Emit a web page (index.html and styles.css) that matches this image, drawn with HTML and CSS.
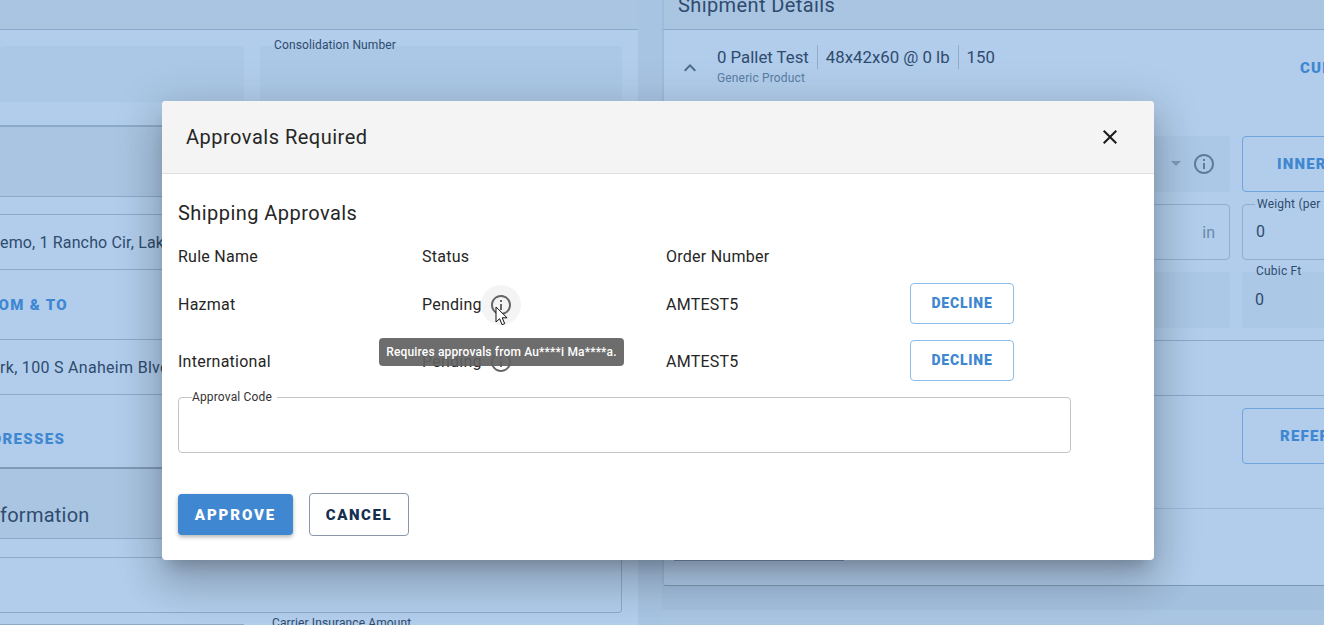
FILE: index.html
```html
<!DOCTYPE html>
<html lang="en">
<head>
<meta charset="utf-8">
<title>Approvals Required</title>
<link rel="stylesheet" href="styles.css">
</head>
<body>
<div class="page">
  <section class="col col-left">
    <div class="panel-head"></div>
    <div class="form-row">
      <div class="fill fill-a"></div>
      <div class="fill-wrap">
        <span class="small-label">Consolidation Number</span>
        <div class="fill fill-b"></div>
      </div>
    </div>
    <div class="band"></div>
    <div class="gap-17"></div>
    <div class="line-row addr addr-first">emo, 1 Rancho Cir, Lake Forest</div>
    <div class="line-row act act-70"><span class="clip-from">FROM &amp; TO</span></div>
    <div class="line-row addr">rk, 100 S Anaheim Blvd</div>
    <div class="line-row act end"><span class="clip-addr">ADDRESSES</span></div>
    <div class="dark-gap"></div>
    <div class="info-head">formation</div>
    <div class="gap-18"></div>
    <div class="box"></div>
    <div class="foot-row">
      <div class="foot-field"></div>
      <span class="small-label foot-label">Carrier Insurance Amount</span>
    </div>
  </section>

  <section class="col col-right">
    <div class="panel-head"><h2 class="ship-title">Shipment Details</h2></div>
    <div class="card">
      <div class="product">
        <svg class="chev" viewBox="0 0 24 24"><path d="M12 8l-6 6 1.41 1.41L12 10.83l4.59 4.58L18 14z"/></svg>
        <div class="product-text">
          <div class="product-line">
            <span class="seg">0 Pallet Test</span><span class="seg">48x42x60 @ 0 lb</span><span class="seg">150</span>
          </div>
          <div class="product-sub">Generic Product</div>
        </div>
        <span class="cut">CUBE</span>
      </div>
      <div class="grid-row">
        <div class="cell fill-cell sel">
          <span class="caret"></span>
          <svg class="info-sm" viewBox="0 0 24 24"><path d="M11 7h2v2h-2zm0 4h2v6h-2zm1-9C6.48 2 2 6.48 2 12s4.48 10 10 10 10-4.48 10-10S17.52 2 12 2zm0 18c-4.41 0-8-3.59-8-8s3.59-8 8-8 8 3.59 8 8-3.59 8-8 8z"/></svg>
        </div>
        <div class="cell btn-cell">INNER PACK</div>
      </div>
      <div class="grid-row">
        <div class="cell out-cell unit">in</div>
        <div class="cell out-cell val"><span class="float">Weight (per unit)</span><span class="num">0</span></div>
      </div>
      <div class="grid-row">
        <div class="cell fill-cell"></div>
        <div class="cell fill-cell val"><span class="float plain">Cubic Ft</span><span class="num">0</span></div>
      </div>
      <div class="rule"></div>
      <div class="rule r-55"></div>
      <div class="ref-row"><div class="cell btn-cell">REFERENCES</div></div>
      <div class="rule r-44"></div>
      <div class="tail"><div class="tail-pill"></div></div>
    </div>
    <div class="below"><div class="below-card"></div></div>
  </section>

  <div class="dialog" role="dialog" aria-label="Approvals Required">
    <header class="dialog-head">
      <h1 class="dialog-title">Approvals Required</h1>
      <svg class="close" viewBox="0 0 24 24"><path d="M19 6.41L17.59 5 12 10.59 6.41 5 5 6.41 10.59 12 5 17.59 6.41 19 12 13.41 17.59 19 19 17.59 13.41 12z"/></svg>
    </header>
    <div class="dialog-body">
      <h2 class="sub-title">Shipping Approvals</h2>
      <div class="approvals">
        <div class="th">Rule Name</div><div class="th">Status</div><div class="th">Order Number</div><div class="th"></div>
        <div class="td">Hazmat</div>
        <div class="td status">Pending
          <span class="icon-btn hover"><svg class="info" viewBox="0 0 24 24"><path d="M11 7h2v2h-2zm0 4h2v6h-2zm1-9C6.48 2 2 6.48 2 12s4.48 10 10 10 10-4.48 10-10S17.52 2 12 2zm0 18c-4.41 0-8-3.59-8-8s3.59-8 8-8 8 3.59 8 8-3.59 8-8 8z"/></svg></span>
        </div>
        <div class="td">AMTEST5</div>
        <div class="td act-cell"><button class="decline">DECLINE</button></div>
        <div class="td">International</div>
        <div class="td status">Pending
          <span class="icon-btn"><svg class="info" viewBox="0 0 24 24"><path d="M11 7h2v2h-2zm0 4h2v6h-2zm1-9C6.48 2 2 6.48 2 12s4.48 10 10 10 10-4.48 10-10S17.52 2 12 2zm0 18c-4.41 0-8-3.59-8-8s3.59-8 8-8 8 3.59 8 8-3.59 8-8 8z"/></svg></span>
        </div>
        <div class="td">AMTEST5</div>
        <div class="td act-cell"><button class="decline">DECLINE</button></div>
      </div>
      <fieldset class="code-field"><legend>Approval Code</legend></fieldset>
      <div class="actions">
        <button class="approve">APPROVE</button>
        <button class="cancel">CANCEL</button>
      </div>
    </div>
    <div class="tooltip">Requires approvals from Au****i Ma****a.</div>
    <svg class="cursor" viewBox="0 0 14 20"><path d="M1 1v15l3.6-3.3 2.5 6 2.6-1.1-2.5-5.8h4.9z"/></svg>
  </div>
</div>
</body>
</html>
```
FILE: styles.css
```css
* { box-sizing: border-box; }
html, body { margin: 0; padding: 0; height: 100%; overflow: hidden; }
body { font-family: Roboto, "Noto Sans", sans-serif; color: #2f4b6e; background: #a8c4e3; }
button { font-family: inherit; cursor: pointer; }

.page { position: relative; width: 1324px; height: 625px; overflow: hidden; display: flex; gap: 24px; background: #a8c4e3; }
.col { display: flex; flex-direction: column; height: 625px; flex: none; overflow: hidden; }
.col-left { width: 638px; background: #b1cdeb; }
.col-right { width: 662px; }

.panel-head { height: 30px; flex: none; background: #a9c5e2; border-bottom: 1px solid #8ca9c9; }
.small-label { font-size: 12px; line-height: 14px; color: #2f4b6e; white-space: nowrap; letter-spacing: .12px; }

.form-row { height: 97px; flex: none; display: flex; gap: 16px; padding: 16px 16px 0 0; border-bottom: 2px solid #8ca9c9; }
.fill { background: #abc8e6; border-radius: 4px 4px 0 0; height: 56px; }
.fill-a { width: 244px; }
.fill-wrap { flex: 1; position: relative; }
.fill-wrap .small-label { position: absolute; left: 14px; top: -8px; }
.fill-b { width: 100%; }

.band { height: 70px; flex: none; background: #a9c5e2; border-bottom: 1px solid #8ca9c9; }
.gap-17 { height: 17px; flex: none; }
.gap-18 { height: 18px; flex: none; }
.line-row { flex: none; display: flex; align-items: center; border-top: 1px solid #8ca9c9; font-size: 16px; letter-spacing: .3px; white-space: nowrap; color: #2f4b6e; }
.addr { height: 55px; }
.addr-first { letter-spacing: .15px; }
.act { font-weight: 900; font-size: 15px; letter-spacing: 1.3px; color: #3f87d1; }
.act-70 { height: 70px; }
.end { height: 75px; padding-top: 16px; border-bottom: 2px solid #8099b8; }
.clip-from { margin-left: -22px; }
.clip-addr { margin-left: -31px; }
.dark-gap { height: 23px; flex: none; background: #a9c5e2; }
.info-head { height: 47px; flex: none; display: flex; align-items: center; background: #a9c5e2; border-bottom: 1px solid #8ca9c9; font-size: 20px; letter-spacing: .25px; color: #2f4b6e; }
.box { width: 622px; height: 56px; flex: none; border: 1px solid #8ca9c9; border-left: 0; border-radius: 0 0 4px 0; }
.foot-row { position: relative; flex: 1; display: flex; align-items: flex-end; }
.foot-field { width: 244px; height: 1px; background: #8ca9c9; }
.foot-label { position: absolute; left: 272px; top: 3px; }

.ship-title { margin: -9px 0 0 14px; font-size: 20px; font-weight: 400; line-height: 28px; letter-spacing: .4px; color: #2f4b6e; }
.col-right .panel-head { border-left: 2px solid #9fbcdc; }
.card { height: 556px; flex: none; background: #b1cdeb; position: relative; border-bottom: 1px solid #7e99b8; border-left: 2px solid #9fbcdc; border-radius: 0 0 0 4px; display: flex; flex-direction: column; }
.product { height: 76px; flex: none; display: flex; align-items: center; position: relative; padding-left: 14px; }
.chev { width: 24px; height: 24px; fill: #4d6a8c; flex: none; }
.product-text { margin-left: 15px; margin-top: -6px; }
.product-line { display: flex; font-size: 16.8px; line-height: 24px; }
.seg { padding: 0 8px; border-left: 1px solid #90acca; }
.seg:first-child { padding-left: 0; border-left: 0; }
.product-sub { font-size: 12px; line-height: 16px; letter-spacing: .15px; color: #5a7ca3; margin-top: 1px; }
.cut { position: absolute; left: 636px; top: 29px; font-size: 15px; font-weight: 900; letter-spacing: 1.2px; color: #3f87d1; white-space: nowrap; }

.grid-row { display: flex; gap: 12px; height: 56px; flex: none; margin-bottom: 12px; padding-left: 466px; }
.grid-row:nth-of-type(2) { margin-top: 30px; }
.cell { flex: none; position: relative; border-radius: 4px; display: flex; align-items: center; white-space: nowrap; }
.grid-row .cell:first-child { width: 100px; }
.grid-row .cell:last-child { width: 100px; padding-left: 13px; font-size: 16px; }
.num { margin-top: -2px; }
.fill-cell { background: #abc8e6; }
.out-cell { border: 1px solid #92aecc; }
.btn-cell { border: 1px solid #6fa4dc; color: #3f87d1; font-weight: 900; font-size: 15px; letter-spacing: 1.2px; padding-left: 34px; width: 100px; }
.grid-row .btn-cell:last-child { padding-left: 34px; font-size: 15px; }
.sel { justify-content: flex-end; padding-right: 16px; }
.caret { width: 0; height: 0; border-left: 5px solid transparent; border-right: 5px solid transparent; border-top: 5px solid #7e99b8; margin-right: 11px; margin-top: -2px; }
.info-sm { width: 24px; height: 24px; fill: #5f7b9c; margin-right: -2px; }
.unit { justify-content: flex-end; padding-right: 14px; font-size: 16px; color: #6a88aa; }
.float { position: absolute; left: 12px; top: -8px; font-size: 12px; line-height: 14px; padding: 0 2px; letter-spacing: .2px; background: #b1cdeb; }
.float.plain { background: transparent; }
.rule { flex: none; height: 1px; background: #8ca9c9; }
.r-55 { margin-top: 54px; }
.ref-row { height: 56px; flex: none; margin-top: 12px; padding-left: 578px; display: flex; }
.ref-row .btn-cell { width: 100px; padding-left: 37px; }
.r-44 { margin-top: 44px; background: #9cb8d8; }
.tail { flex: 1; position: relative; }
.tail-pill { position: absolute; left: 10px; bottom: 24px; width: 170px; height: 1px; background: #7e99b8; }
.below { flex: 1; padding-top: 24px; background: #a4c0df; display: flex; }
.below-card { flex: 1; background: #a9c5e2; }

.dialog { position: absolute; left: 162px; top: 101px; width: 992px; height: 459px; background: #fff; border-radius: 4px; color: #262626; box-shadow: 0 11px 15px -7px rgba(0,0,0,.2), 0 24px 38px 3px rgba(0,0,0,.14), 0 9px 46px 8px rgba(0,0,0,.12); }
.dialog-head { height: 73px; display: flex; align-items: center; justify-content: space-between; padding: 0 32px 0 24px; background: #f4f4f4; border-bottom: 1px solid #e0e0e0; border-radius: 4px 4px 0 0; }
.dialog-title { margin: 0; font-size: 20px; font-weight: 400; line-height: 28px; letter-spacing: .5px; }
.close { width: 24px; height: 24px; fill: #1a1a1a; }
.dialog-body { padding: 25px 16px 0; }
.sub-title { margin: 0; font-size: 20px; font-weight: 400; line-height: 28px; letter-spacing: .45px; }
.approvals { display: grid; grid-template-columns: repeat(4, 244px); grid-template-rows: 24px 41px 41px; row-gap: 16px; margin-top: 16px; }
.th, .td { display: flex; align-items: center; padding-top: 2px; font-size: 16px; letter-spacing: .25px; white-space: nowrap; }
.td.act-cell { padding-top: 0; }
.icon-btn { width: 40px; height: 40px; margin-left: -1px; flex: none; display: flex; align-items: center; justify-content: center; border-radius: 50%; }
.icon-btn.hover { background: #f4f4f4; }
.info { width: 24px; height: 24px; fill: #666; }
.decline { width: 104px; height: 41px; background: #fff; border: 1px solid #8fbceb; border-radius: 4px; color: #3f87d1; font-weight: 900; font-size: 14px; letter-spacing: .8px; padding: 0 0 2px; }
.code-field { margin: 9px 0 0; padding: 0 13px; width: 893px; height: 63px; border: 1px solid #c4c4c4; border-radius: 4px; }
.code-field legend { padding: 0 5px 0 0; font-size: 12px; line-height: 14px; letter-spacing: .15px; color: #333; }
.actions { display: flex; align-items: center; gap: 16px; margin-top: 40px; }
.approve { width: 115px; height: 41px; background: #3f87d1; color: #fff; border: 0; border-radius: 4px; font-weight: 900; font-size: 15px; letter-spacing: 1.9px; padding: 0; box-shadow: 0 2px 4px rgba(0,0,0,.3); }
.cancel { width: 100px; height: 43px; background: #fff; color: #142f4f; border: 1px solid #8a97a8; border-radius: 4px; font-weight: 900; font-size: 15px; letter-spacing: 1.6px; padding: 0; }
.tooltip { position: absolute; left: 217px; top: 237px; width: 245px; height: 28px; display: flex; align-items: center; justify-content: center; background: rgba(97,97,97,.92); color: #fff; font-size: 12px; font-weight: 500; letter-spacing: .16px; border-radius: 4px; white-space: nowrap; }
.cursor { position: absolute; left: 333px; top: 205px; width: 14px; height: 20px; fill: #fff; stroke: #111; stroke-width: 1; }
```
